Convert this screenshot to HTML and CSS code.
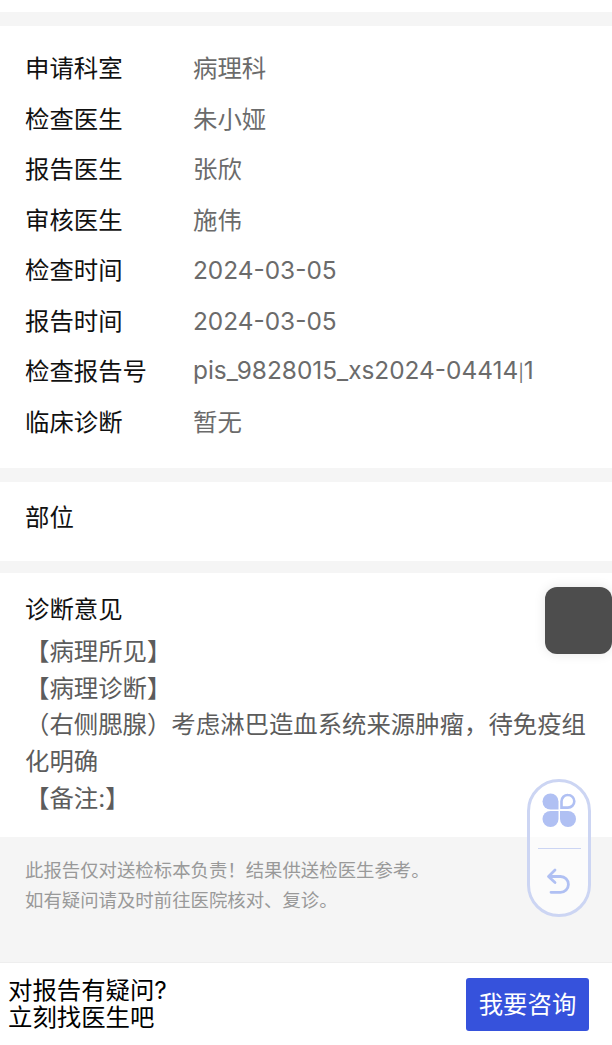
FILE: index.html
```html
<!DOCTYPE html>
<html lang="zh-CN">
<head>
  <meta charset="UTF-8" />
  <title>检查报告</title>
  <link rel="stylesheet" href="styles.css">
</head>
<body>
  <div class="page">
    <div class="section info">
      <div class="row"><span class="label">申请科室</span><span class="value">病理科</span></div>
      <div class="row"><span class="label">检查医生</span><span class="value">朱小娅</span></div>
      <div class="row"><span class="label">报告医生</span><span class="value">张欣</span></div>
      <div class="row"><span class="label">审核医生</span><span class="value">施伟</span></div>
      <div class="row"><span class="label">检查时间</span><span class="value">2024-03-05</span></div>
      <div class="row"><span class="label">报告时间</span><span class="value">2024-03-05</span></div>
      <div class="row"><span class="label">检查报告号</span><span class="value">pis_9828015_xs2024-04414<span class="sep">|</span>1</span></div>
      <div class="row"><span class="label">临床诊断</span><span class="value">暂无</span></div>
    </div>

    <div class="section part">
      <div class="label">部位</div>
    </div>

    <div class="section diagnosis">
      <div class="label">诊断意见</div>
      <div class="diagnosis-text">
        <div>【病理所见】</div>
        <div>【病理诊断】</div>
        <div>（右侧腮腺）考虑淋巴造血系统来源肿瘤，待免疫组化明确</div>
        <div>【备注:】</div>
      </div>
    </div>

    <div class="notice">
      <p>此报告仅对送检标本负责！结果供送检医生参考。</p>
      <p>如有疑问请及时前往医院核对、复诊。</p>
    </div>

    <div class="footer">
      <div class="footer-text">对报告有疑问?<br>立刻找医生吧</div>
      <button class="consult-btn" type="button">我要咨询</button>
    </div>
  </div>

  <!-- floating widgets -->
  <div class="float-bump"></div>
  <div class="float-dark"></div>
  <div class="float-pill">
    <svg class="clover" width="34" height="34" viewBox="0 0 34 34">
      <path fill="#b0c0f3" d="M8.500 0.500a8 8 0 0 1 8 8v8h-8a8 8 0 0 1 0-16z"/>
      <path fill="#b0c0f3" d="M8.500 18h8v8a8 8 0 1 1-8-8z"/>
      <path fill="#b0c0f3" d="M18 18h8a8 8 0 1 1-8 8z"/>
      <path fill="none" stroke="#b0c0f3" stroke-width="2.600" d="M26 2a6.300 6.300 0 0 1 0 12.600h-6.500v-6.300A6.300 6.300 0 0 1 26 2z"/>
    </svg>
    <div class="pill-line"></div>
    <svg class="back" width="26" height="28" viewBox="0 0 26 28">
      <path fill="none" stroke="#b0c0f3" stroke-width="2.800" stroke-linecap="round" stroke-linejoin="round" d="M9 2 2.500 8.500 9 14.500M3 8.500h11.500a7.800 7.800 0 0 1 0 15.800H5"/>
    </svg>
  </div>
</body>
</html>
```

FILE: styles.css
```css
* {
  box-sizing: border-box;
}
body {
  margin: 0;
  background: #fff;
  font-family: "Inter", "Noto Sans CJK SC", sans-serif;
  color: #000;
}
.page {
  width: 612px;
  height: 1045px;
  background: #f5f5f5;
  border-top: 12px solid #fff;
  display: flex;
  flex-direction: column;
  overflow: hidden;
}
.section {
  background: #fff;
  padding: 0 25px;
  margin-top: 14px;
}
.label {
  font-size: 24.4px;
  line-height: 34px;
  color: #111;
}
.info {
  padding-top: 17px;
  height: 442px;
}
.row {
  display: flex;
  align-items: center;
  height: 50.5px;
}
.row .label {
  width: 168px;
  flex-shrink: 0;
}
.value {
  font-size: 24.4px;
  line-height: 34px;
  color: #6b6b6b;
}
.sep {
  font-size: 17px;
}
.part {
  height: 79px;
  padding-top: 18px;
}
.diagnosis {
  margin-top: 12px;
  height: 264px;
  padding-top: 19px;
}
.diagnosis-text {
  margin-top: 7px;
  font-size: 24.4px;
  line-height: 36.7px;
  color: #5c5c5c;
}
.notice {
  height: 125px;
  padding: 18px 25px 0;
  font-size: 18.4px;
  line-height: 30px;
  color: #999;
}
.notice p {
  margin: 0;
}
.footer {
  flex: 1;
  background: #fff;
  border-top: 1px solid #eee;
  display: flex;
  align-items: center;
  justify-content: space-between;
  padding: 0 23px 0 8px;
}
.footer-text {
  font-size: 24.4px;
  line-height: 27px;
  color: #000;
}
.consult-btn {
  width: 123px;
  height: 53px;
  border: none;
  border-radius: 3px;
  padding: 0 0 4px;
  background: #3652dc;
  color: #fff;
  font-family: inherit;
  font-size: 24.4px;
}
.float-dark {
  position: absolute;
  left: 545px;
  top: 587px;
  width: 67px;
  height: 67px;
  border-radius: 12px;
  background: #4d4d4d;
  box-shadow: 0 0 12px rgba(0, 0, 0, 0.1);
}
.float-bump {
  position: absolute;
  left: 553px;
  top: 646px;
  width: 51px;
  height: 23px;
  border-radius: 26px 26px 0 0;
  background: #fff;
}
.float-pill {
  position: absolute;
  left: 527px;
  top: 779px;
  width: 64px;
  height: 138px;
  border: 3px solid #ccd5f3;
  border-radius: 32px;
  background: rgba(255, 255, 255, 0.6);
  display: flex;
  flex-direction: column;
  align-items: center;
}
.clover {
  margin-top: 11px;
  flex-shrink: 0;
}
.pill-line {
  width: 43px;
  height: 1px;
  margin-top: 21px;
  background: #ccd5f3;
}
.back {
  margin-top: 19px;
  flex-shrink: 0;
}
```
